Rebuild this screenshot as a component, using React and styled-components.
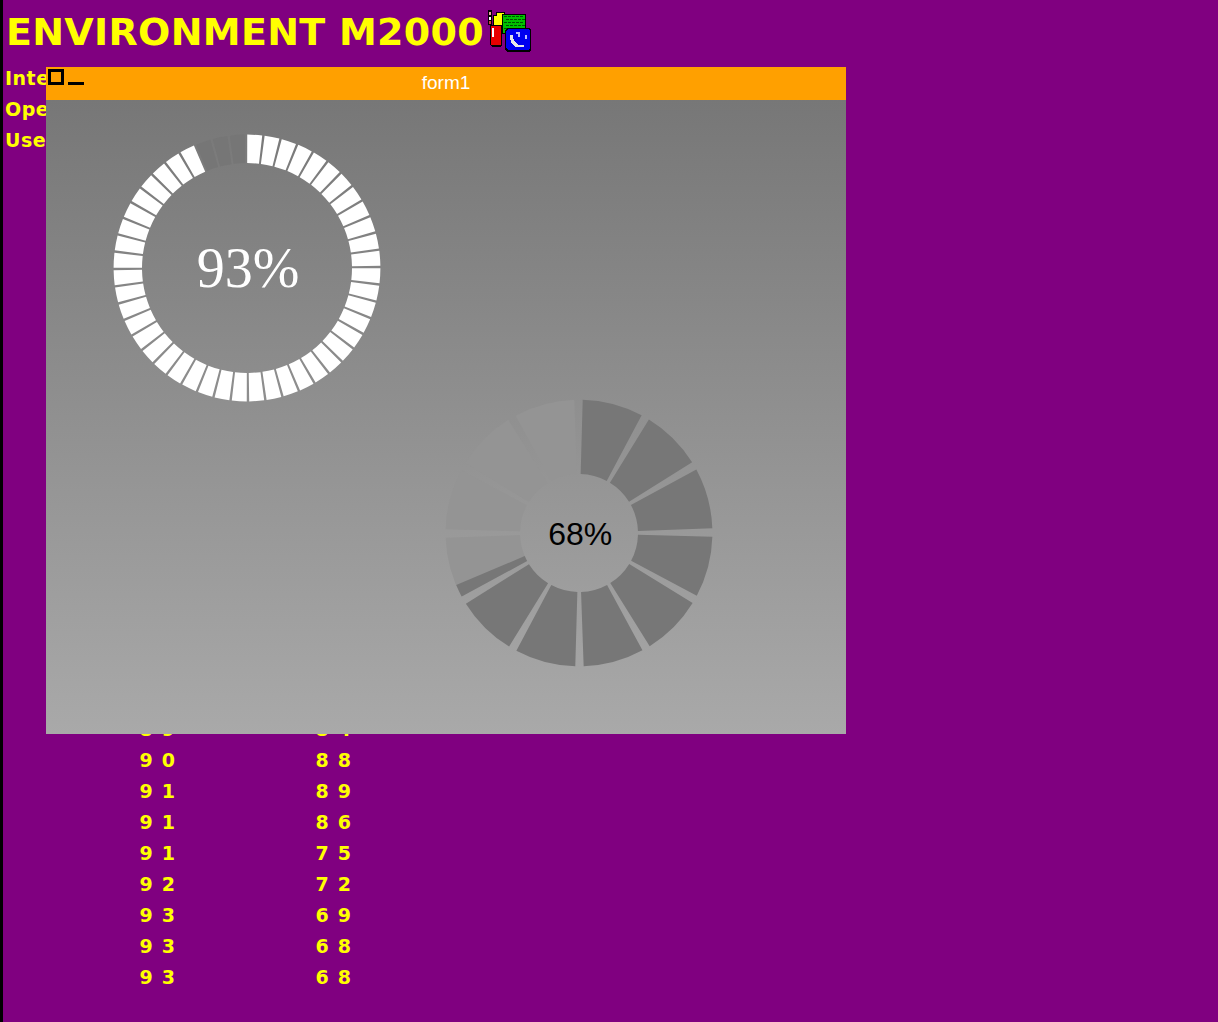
import React from 'react';
import styled, { createGlobalStyle } from 'styled-components';

const GlobalStyle = createGlobalStyle`
  html, body {
    margin: 0;
    padding: 0;
    background: #800080;
  }
`;

// Page background with the black strip down the left edge
const Page = styled.div`
  position: relative;
  box-sizing: border-box;
  width: 1218px;
  height: 1022px;
  overflow: hidden;
  background: #800080;
  border-left: 3px solid #000;
  color: #ffff00;
  font-family: "DejaVu Sans", Verdana, sans-serif;
  font-weight: 700;
`;

const Header = styled.div`
  display: flex;
  align-items: flex-start;
  height: 63px;
  padding-left: 3px;
`;

const Title = styled.h1`
  margin: 1px 0 0;
  font-size: 38px;
  line-height: 62px;
  font-weight: 700;
  letter-spacing: 0.3px;
  white-space: nowrap;
`;

const Logo = styled.svg`
  flex: none;
  width: 44px;
  height: 44px;
  margin: 10px 0 0 4px;
  shape-rendering: crispEdges;
`;

const Table = styled.div`
  display: grid;
  grid-template-columns: 135px 176px 100px;
  grid-auto-rows: 31px;
  padding-left: 2px;
  font-size: 19px;
  line-height: 31px;
`;

const Cell = styled.div`
  white-space: pre;
  letter-spacing: ${({ $spaced }) => ($spaced ? '0' : '0.5px')};
  word-spacing: ${({ $spaced }) => ($spaced ? '2.5px' : '0')};
  margin-left: ${({ $spaced }) => ($spaced ? '-0.5px' : '0')};
`;

// Floating window on top of the table
const Window = styled.div`
  position: absolute;
  left: 43px;
  top: 67px;
  width: 800px;
  height: 667px;
  display: flex;
  flex-direction: column;
`;

const TitleBar = styled.div`
  flex: none;
  position: relative;
  height: 33px;
  background: #ffa000;
  color: #fff;
  font-family: "Liberation Sans", Arial, sans-serif;
  font-size: 19px;
  font-weight: 400;
  line-height: 32px;
  text-align: center;
`;

const Controls = styled.div`
  position: absolute;
  left: 2px;
  top: 2px;
  display: flex;
  align-items: flex-end;
  gap: 4px;
`;

const CloseBox = styled.div`
  box-sizing: border-box;
  width: 16px;
  height: 16px;
  border: 3px solid #000;
`;

const MinBar = styled.div`
  width: 16px;
  height: 3px;
  background: #000;
`;

const FormBody = styled.div`
  flex: 1;
  display: grid;
  grid-template-columns: 66.7px 332.6px 1fr;
  grid-template-rows: 33.5px 265.8px 1fr;
  background: linear-gradient(to bottom, #777777, #a9a9a9);
`;

const GaugeBox = styled.div`
  grid-column: ${({ $col }) => $col};
  grid-row: ${({ $row }) => $row};
  display: grid;
  place-items: center;
  width: 268px;
  height: 268px;
  & > * {
    grid-area: 1 / 1;
  }
`;

const GaugeLabel = styled.span`
  font-family: ${({ $serif }) =>
    $serif ? '"Liberation Serif", "Times New Roman", serif' : '"Liberation Sans", Arial, sans-serif'};
  font-size: ${({ $size }) => $size}px;
  font-weight: 400;
  line-height: 1;
  margin-left: ${({ $serif }) => ($serif ? '3px' : '2px')};
  margin-top: ${({ $serif }) => ($serif ? '0' : '2px')};
  color: ${({ $color }) => $color};
`;

const polar = (r, deg) => {
  const a = (deg * Math.PI) / 180;
  return [134 + r * Math.sin(a), 134 - r * Math.cos(a)];
};

const sector = (rOut, rIn, from, to) => {
  const [x1, y1] = polar(rOut, from);
  const [x2, y2] = polar(rOut, to);
  const [x3, y3] = polar(rIn, to);
  const [x4, y4] = polar(rIn, from);
  return `M${x1} ${y1}A${rOut} ${rOut} 0 0 1 ${x2} ${y2}L${x3} ${y3}A${rIn} ${rIn} 0 0 0 ${x4} ${y4}Z`;
};

const Ring = styled.svg`
  width: 268px;
  height: 268px;
`;

// Ring made of count sectors, filled up to fillAngle going clockwise from the top
const Gauge = ({ count, rOut, rIn, pad, tail, fillAngle, on, off, label, labelColor, size, serif, col, row }) => {
  const step = 360 / count;
  const parts = [];
  for (let i = 0; i < count; i++) {
    const from = i * step + pad;
    const to = (i + 1) * step - tail;
    if (fillAngle >= to) {
      parts.push(<path key={i} d={sector(rOut, rIn, from, to)} fill={on} />);
    } else if (fillAngle <= from) {
      parts.push(<path key={i} d={sector(rOut, rIn, from, to)} fill={off} />);
    } else {
      parts.push(<path key={i} d={sector(rOut, rIn, from, to)} fill={off} />);
      parts.push(<path key={`${i}f`} d={sector(rOut, rIn, from, fillAngle)} fill={on} />);
    }
  }
  return (
    <GaugeBox $col={col} $row={row}>
      <Ring viewBox="0 0 268 268">{parts}</Ring>
      <GaugeLabel $size={size} $serif={serif} $color={labelColor}>{label}</GaugeLabel>
    </GaugeBox>
  );
};

const bricks = [];
for (let y = 0; y < 6; y++) {
  for (let x = 0; x < 5; x++) {
    bricks.push(<rect key={`${x}-${y}`} x={16 + x * 4 + (y % 2) * 2} y={6 + y * 3} width="3" height="1" fill="#005000" />);
  }
}

const EnvLogo = () => (
  <Logo viewBox="0 0 44 44">
    {/* extinguisher hose */}
    <rect x="0" y="0" width="4" height="15" fill="#000" />
    <rect x="1" y="2" width="2" height="3" fill="#f0a0a0" />
    <rect x="1" y="7" width="2" height="3" fill="#ffffff" />
    <rect x="1" y="11" width="2" height="3" fill="#d04040" />
    {/* yellow can */}
    <path d="M5 5h3V2h9v2h2v12H5z" fill="#000" />
    <path d="M6 6h3V3h7v2h2v10H6z" fill="#ffff00" />
    {/* green sheet */}
    <rect x="14" y="4" width="24" height="20" fill="#000" />
    <rect x="15" y="5" width="22" height="18" fill="#00c000" />
    {bricks}
    {/* extinguisher body */}
    <path d="M2 15h12v20l-2 2H4l-2-2z" fill="#000" />
    <rect x="3" y="16" width="10" height="19" fill="#e80000" />
    <rect x="4" y="18" width="2" height="9" fill="#fff" />
    {/* blue tile */}
    <path d="M19 18h22l2 2v20l-2 2H19l-2-2V20z" fill="#000" />
    <path d="M20 19h20l2 2v17l-2 2H20l-2-2V21z" fill="#0000f0" />
    <path d="M22 25h3v3l2 4 3 3h6v2h-8l-4-3-2-5z" fill="#e8e8e8" />
    <rect x="28" y="22" width="4" height="2" fill="#c0c0ff" />
    <rect x="30" y="24" width="2" height="3" fill="#c0c0ff" />
    <rect x="37" y="25" width="2" height="4" fill="#c0c0ff" />
  </Logo>
);

const labels = ['Inte', 'Ope', 'User'];
const values = [
  ['8 9', '8 4'],
  ['9 0', '8 8'],
  ['9 1', '8 9'],
  ['9 1', '8 6'],
  ['9 1', '7 5'],
  ['9 2', '7 2'],
  ['9 3', '6 9'],
  ['9 3', '6 8'],
  ['9 3', '6 8'],
];
const FIRST_VALUE_ROW = 21;

const App = () => {
  const rows = [];
  for (let i = 0; i < FIRST_VALUE_ROW + values.length; i++) {
    const v = values[i - FIRST_VALUE_ROW];
    rows.push(
      <React.Fragment key={i}>
        <Cell>{labels[i] || ''}</Cell>
        <Cell $spaced>{v ? v[0] : ''}</Cell>
        <Cell $spaced>{v ? v[1] : ''}</Cell>
      </React.Fragment>
    );
  }

  return (
    <Page>
      <GlobalStyle />
      <Header>
        <Title>ENVIRONMENT M2000</Title>
        <EnvLogo />
      </Header>
      <Table>{rows}</Table>
      <Window>
        <TitleBar>
          form1
          <Controls>
            <CloseBox />
            <MinBar />
          </Controls>
        </TitleBar>
        <FormBody>
          <Gauge
            col={2}
            row={2}
            count={48}
            rOut={133.4}
            rIn={105}
            pad={0.1}
            tail={0.95}
            fillAngle={337.5}
            on="#ffffff"
            off="#767676"
            label="93%"
            labelColor="#ffffff"
            size={56}
            serif
          />
          <Gauge
            col={3}
            row={3}
            count={12}
            rOut={133.4}
            rIn={59}
            pad={1.6}
            tail={2}
            fillAngle={247}
            on="#777777"
            off="#949494"
            label="68%"
            labelColor="#000000"
            size={32}
          />
        </FormBody>
      </Window>
    </Page>
  );
};

export default App;
